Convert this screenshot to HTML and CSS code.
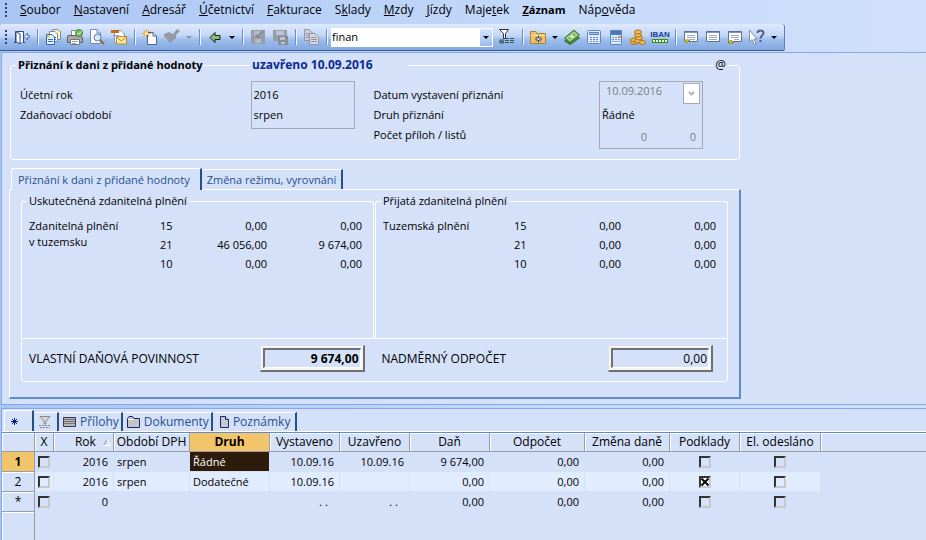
FILE: index.html
```html
<!DOCTYPE html>
<html lang="cs">

<head>
    <meta charset="UTF-8">
    <title>Přiznání k dani z přidané hodnoty</title>
    <meta name="viewport" content="width=device-width, initial-scale=1">
    <link rel="stylesheet" href="styles.css">
</head>

<body>

    <nav class="menu">
        <span class="grip"></span>
        <button><u>S</u>oubor</button>
        <button><u>N</u>astavení</button>
        <button><u>A</u>dresář</button>
        <button><u>Ú</u>četnictví</button>
        <button><u>F</u>akturace</button>
        <button>S<u>k</u>lady</button>
        <button><u>M</u>zdy</button>
        <button><u>J</u>ízdy</button>
        <button>Maje<u>t</u>ek</button>
        <button class="current"><u>Z</u>áznam</button>
        <button>Náp<u>o</u>věda</button>
    </nav>

    <div class="toolbar">
        <span class="grip"></span>
        <button class="tool" aria-label="Konec">
            <svg viewBox="0 0 16 16"><path d="M1.500 13V2.500H9.500V13" fill="#f4f8ff" stroke="#30497f"/><path d="M2 2.500L6 5V15L2 12.500Z" fill="#fff" stroke="#30497f"/><path d="M0 13.500H2M9 13.500H11" stroke="#30497f"/><path d="M10 7.500L13.500 4V6.500H15.500V8.500H13.500V11Z" fill="#d9e8ff" stroke="#4d76b5"/></svg>
        </button>
        <span class="sep"></span>
        <button class="tool" aria-label="Kopírovat záznam">
            <svg viewBox="0 0 16 16"><path d="M7.500 .5H13L15.500 3V10.500H7.500Z" fill="#fff3a8" stroke="#7b8db0"/><path d="M4.500 2.500H10L12.500 5V12.500H4.500Z" fill="#fff" stroke="#6d8cc4"/><path d="M1.500 5.500H7L9.500 8V15.500H1.500Z" fill="#e9f1ff" stroke="#2f63b5"/><path d="M2 6H5V9H2Z" fill="#f4d25a"/><path d="M3 10.500H8M3 12.500H8M10 8.500H11M10 10.500H11" stroke="#2f6cc8"/></svg>
        </button>
        <button class="tool" aria-label="Tisk">
            <svg viewBox="0 0 16 16"><path d="M4.500 1.500H12V7H4.500Z" fill="#fff" stroke="#888"/><path d="M1 6.500H14L15.500 9V13.500H.5V8Z" fill="#a9a9a9" stroke="#5f5f5f"/><path d="M3.500 10.500H12.500V15.500H3.500Z" fill="#fff" stroke="#777"/><path d="M5 12.500H11M5 14.500H9" stroke="#8aa"/><circle cx="12" cy="4" r="3.500" fill="#78b95c" stroke="#4c8c37"/><path d="M10 4L11.500 5.500L14 2.500" fill="none" stroke="#fff"/></svg>
        </button>
        <button class="tool" aria-label="Náhled">
            <svg viewBox="0 0 16 16"><path d="M1.500 .5H8L11.500 4V14.500H1.500Z" fill="#fff" stroke="#7388b5"/><path d="M8 .5V4H11.500" fill="#dce7fa" stroke="#7388b5"/><circle cx="8.500" cy="8.500" r="3.500" fill="#d5eaff" stroke="#527eae"/><path d="M11 11L15 15" stroke="#9c6633" stroke-width="2"/></svg>
        </button>
        <button class="tool" aria-label="Odeslat poštou">
            <svg viewBox="0 0 16 16"><path d="M3.500 1.500H10L13.500 5V13.500H3.500Z" fill="#fff" stroke="#8b93ac"/><path d="M0 1H8V4H0Z" fill="#c96c18"/><path d="M5.500 7.500H15.500V15H5.500Z" fill="#ffe7a0" stroke="#b58a33"/><path d="M5.500 8L10.500 12L15.500 8" fill="none" stroke="#b58a33"/><path d="M2 6.500H8" stroke="#8ca4cf"/></svg>
        </button>
        <span class="sep"></span>
        <button class="tool" aria-label="Nový">
            <svg viewBox="0 0 16 16"><path d="M5.500 3.500H11L14.500 7V15.500H5.500Z" fill="#fff" stroke="#46609b"/><path d="M11 3.500V7H14.500" fill="#dbe7fb" stroke="#46609b"/><path d="M4.500 0V9M0 4.500H9M1.500 1.500L7.500 7.500M7.500 1.500L1.500 7.500" stroke="#e6a21e"/><circle cx="4.500" cy="4.500" r="1.500" fill="#fff3a0"/></svg>
        </button>
        <button class="tool" aria-label="Formát" disabled>
            <svg viewBox="0 0 16 16"><path d="M0 5L5 3L9 5L13 0L16 2L12 6V9L6 14L0 7Z" fill="#9599a2"/></svg>
        </button>
        <button class="arrow" aria-label="Další formáty" disabled><svg viewBox="0 0 6 3"><path d="M0 0H6L3 3Z"/></svg></button>
        <span class="sep"></span>
        <button class="tool" aria-label="Zpět">
            <svg viewBox="0 0 16 16"><path d="M3 8.500L8 3.500V6.500H13V10.500H8V13.500Z" fill="#8fbb78" stroke="#10240c"/></svg>
        </button>
        <button class="arrow" aria-label="Historie"><svg viewBox="0 0 6 3"><path d="M0 0H6L3 3Z"/></svg></button>
        <span class="sep"></span>
        <button class="tool" aria-label="Uložit" disabled>
            <svg viewBox="0 0 16 16"><path d="M1 1H15V15H2L1 14Z" fill="#999ca4"/><path d="M4 2H12V7H4ZM5 10H11V14H5Z" fill="#b3b9c6"/><path d="M6 6L8 8L13 2" fill="none" stroke="#858992" stroke-width="2"/></svg>
        </button>
        <button class="tool" aria-label="Uložit a zavřít" disabled>
            <svg viewBox="0 0 16 16"><path d="M1 1H15V12H1Z" fill="#999ca4"/><path d="M4 2H12V6H4Z" fill="#bcc5d7"/><path d="M6 7H16V16H6Z" fill="#898d96"/><path d="M8 8H13V11H8ZM9 13H13V15H9Z" fill="#bac3d4"/></svg>
        </button>
        <span class="sep"></span>
        <button class="tool" aria-label="Kopírovat" disabled>
            <svg viewBox="0 0 16 16"><path d="M1.500 .5H6L9.500 4V11.500H1.500Z" fill="#cbd0dc" stroke="#9094a0"/><path d="M6.500 4.500H12L15.500 8V15.500H6.500Z" fill="#d5d9e2" stroke="#9094a0"/><path d="M3 4.500H6M3 6.500H6M3 8.500H6M8 8.500H13M8 10.500H14M8 12.500H14" stroke="#9094a0"/></svg>
        </button>
        <span class="sep"></span>
        <div class="combo">
            <input type="text" value="finan" aria-label="Hledat">
            <button aria-label="Rozbalit"><svg viewBox="0 0 6 3"><path d="M0 0H6L3 3Z"/></svg></button>
        </div>
        <button class="tool" aria-label="Filtr">
            <svg viewBox="0 0 16 16"><path d="M.5 .5H9.500L6.500 4.500V9.500H4.500V4.500Z" fill="#fff" stroke="#333"/><path d="M5 13.500V14H1V11H5M1 12.500H5M6 11.500H10M6 13.500H10M11 9.500H15M11 11.500H15M11 13.500H15M6 9.500H10" fill="none" stroke="#2b5a50"/></svg>
        </button>
        <span class="sep"></span>
        <button class="tool" aria-label="Složka">
            <svg viewBox="0 0 16 16"><path d="M.5 14.500V2.500H6L7 4.500H15.500V14.500Z" fill="#efc261" stroke="#a9833d"/><path d="M1 6.500H15" stroke="#ffe9a9"/><path d="M8.500 6.500V13.500M5 10H12M6 7.500L11 12.500M11 7.500L6 12.500" stroke="#213e8c"/><circle cx="8.500" cy="10" r="1" fill="#fff"/></svg>
        </button>
        <button class="arrow" aria-label="Další složky"><svg viewBox="0 0 6 3"><path d="M0 0H6L3 3Z"/></svg></button>
        <button class="tool" aria-label="Platby">
            <svg viewBox="0 0 16 16"><path d="M.5 12L9 5L15.500 9L6 15.500Z" fill="#4d8f3c" stroke="#2f6d2a"/><path d="M.5 9L10 1L15.500 6L6 13.500Z" fill="#7db562" stroke="#34752e"/><path d="M3 9L10 3.500L13 6L6 11.500Z" fill="none" stroke="#c6e0a8"/><ellipse cx="8" cy="7.500" rx="2" ry="1.500" fill="#e2efb8"/></svg>
        </button>
        <button class="tool" aria-label="Výpočet">
            <svg viewBox="0 0 16 16"><rect x="1.500" y="1.500" width="13" height="13" rx="1" fill="#dfeaff" stroke="#6086c5"/><path d="M3.500 3.500H12.500V5.500H3.500Z" fill="#a9c3ec" stroke="#5b82bf"/><path d="M4 8.500H13M4 10.500H13M4 12.500H13" stroke="#678bc5" stroke-dasharray="2 1"/></svg>
        </button>
        <button class="tool" aria-label="Kalkulačka">
            <svg viewBox="0 0 16 16"><path d="M2.500 1.500H13.500V15.500H2.500Z" fill="#deebff" stroke="#5f85c0"/><path d="M3 2H13V6H3Z" fill="#497bb9"/><path d="M4 8.500H12M4 10.500H12M4 12.500H12" stroke="#6f91c6" stroke-dasharray="2 1"/><path d="M10 7H13V9H10Z" fill="#e49035"/></svg>
        </button>
        <button class="tool" aria-label="Mince">
            <svg viewBox="0 0 16 16"><g fill="#f1bd54" stroke="#a96d19"><ellipse cx="4" cy="13.500" rx="3.500" ry="2"/><ellipse cx="4" cy="11" rx="3.500" ry="2"/><ellipse cx="8" cy="12" rx="3.500" ry="2"/><ellipse cx="9" cy="9" rx="3.500" ry="2"/><ellipse cx="8" cy="6" rx="3.500" ry="2"/><ellipse cx="8" cy="3" rx="3.500" ry="2"/><ellipse cx="12.500" cy="13.500" rx="3" ry="2"/></g></svg>
        </button>
        <button class="tool" aria-label="IBAN">
            <svg viewBox="0 0 16 16"><text x="8" y="8" class="iban" text-anchor="middle">IBAN</text><path d="M0 10H16V14H0Z" fill="#3c8a21"/><path d="M1 12H15" stroke="#eaffcb" stroke-width="2" stroke-dasharray="2 1"/></svg>
        </button>
        <span class="sep"></span>
        <button class="tool" aria-label="Seznam dole">
            <svg viewBox="0 0 16 16"><path d="M1.500 2.500H14.500V12.500H1.500Z" fill="#fff" stroke="#607294"/><path d="M2 3.500H14" stroke="#8395b7"/><path d="M4 6.500H12M4 8.500H12M7 10.500H12" stroke="#9aa8c0"/><path d="M1 11H7L4 14Z" fill="#e5d51d" stroke="#908718"/></svg>
        </button>
        <button class="tool" aria-label="Seznam">
            <svg viewBox="0 0 16 16"><path d="M1.500 2.500H14.500V12.500H1.500Z" fill="#fff" stroke="#607294"/><path d="M2 3.500H14" stroke="#8395b7"/><path d="M4 6.500H12M4 8.500H12M4 10.500H12" stroke="#9aa8c0"/></svg>
        </button>
        <button class="tool" aria-label="Seznam nahoře">
            <svg viewBox="0 0 16 16"><path d="M1.500 2.500H14.500V12.500H1.500Z" fill="#fff" stroke="#607294"/><path d="M2 3.500H14" stroke="#8395b7"/><path d="M4 6.500H12M4 8.500H12M7 10.500H12" stroke="#9aa8c0"/><path d="M1 14H7L4 11Z" fill="#e5d51d" stroke="#908718"/></svg>
        </button>
        <button class="tool" aria-label="Nápověda">
            <svg viewBox="0 0 16 16"><path d="M.5 1V13L3 10.500L5 15H7L5 10H8Z" fill="#fff" stroke="#8190a9"/><path d="M8.500 4C8.500 .5 14.500 .5 14.500 4C14.500 6.500 11.500 6.500 11.500 9.500M11.500 11V13" fill="none" stroke="#4d6384" stroke-width="2"/></svg>
        </button>
        <button class="arrow" aria-label="Další"><svg viewBox="0 0 6 3"><path d="M0 0H6L3 3Z"/></svg></button>
    </div>

    <main class="sheet">
        <section class="group">
            <div class="group-title">
                <h1>Přiznání k dani z přidané hodnoty</h1>
                <strong class="state">uzavřeno 10.09.2016</strong>
                <span class="at">@</span>
            </div>
            <div class="form">
                <div class="labels">
                    <label for="rok">Účetní rok</label>
                    <label for="obdobi">Zdaňovací období</label>
                </div>
                <div class="box">
                    <input type="text" id="rok" value="2016" readonly>
                    <input type="text" id="obdobi" value="srpen" readonly>
                </div>
                <div class="labels second">
                    <label for="datum">Datum vystavení přiznání</label>
                    <label for="druh">Druh přiznání</label>
                    <label for="priloh">Počet příloh / listů</label>
                </div>
                <div class="box">
                    <div class="date">
                        <input type="text" id="datum" value="10.09.2016" disabled>
                        <button aria-label="Kalendář" disabled><svg viewBox="0 0 8 6"><path d="M1 1L4 4L7 1" fill="none" stroke="#aaa" stroke-width="2"/></svg></button>
                    </div>
                    <input type="text" id="druh" value="Řádné" readonly>
                    <div class="counts">
                        <input type="text" id="priloh" value="0" disabled>
                        <input type="text" aria-label="Počet listů" value="0" disabled>
                    </div>
                </div>
            </div>
        </section>

        <div class="tabs">
            <button class="tab active">Přiznání k dani z přidané hodnoty</button>
            <button class="tab">Změna režimu, vyrovnání</button>
        </div>
        <div class="tab-panel">
            <div class="halves">
                <section class="half">
                    <h2>Uskutečněná zdanitelná plnění</h2>
                    <table class="rates">
                        <tr><th rowspan="3">Zdanitelná plnění<br>v tuzemsku</th><td>15</td><td class="base">0,00</td><td class="tax">0,00</td></tr>
                        <tr><td>21</td><td class="base">46 056,00</td><td class="tax">9 674,00</td></tr>
                        <tr><td>10</td><td class="base">0,00</td><td class="tax">0,00</td></tr>
                    </table>
                </section>
                <section class="half">
                    <h2>Přijatá zdanitelná plnění</h2>
                    <table class="rates">
                        <tr><th rowspan="3">Tuzemská plnění</th><td>15</td><td class="base">0,00</td><td class="tax">0,00</td></tr>
                        <tr><td>21</td><td class="base">0,00</td><td class="tax">0,00</td></tr>
                        <tr><td>10</td><td class="base">0,00</td><td class="tax">0,00</td></tr>
                    </table>
                </section>
            </div>
            <div class="totals">
                <div class="total">
                    <label for="povinnost">VLASTNÍ DAŇOVÁ POVINNOST</label>
                    <span class="bevel"><input type="text" id="povinnost" class="strong" value="9 674,00" readonly></span>
                </div>
                <div class="total">
                    <label for="odpocet">NADMĚRNÝ ODPOČET</label>
                    <span class="bevel"><input type="text" id="odpocet" value="0,00" readonly></span>
                </div>
            </div>
        </div>
    </main>

    <section class="list">
        <div class="list-tabs">
            <button class="list-tab active" aria-label="Seznam"><svg width="9" height="9" viewBox="0 0 9 9"><path d="M4.500 1V8M1 4.500H8M2 2L7 7M7 2L2 7" stroke="#0a1f7c"/></svg></button>
            <button class="list-tab narrow" aria-label="Filtr"><svg width="12" height="12" viewBox="0 0 12 12"><path d="M1 .5H11L7 5V8H5V5Z" fill="#d6d6d6" stroke="#888"/><path d="M0 9.500H12M1 11.500H11" stroke="#888" stroke-dasharray="2 1"/></svg></button>
            <button class="list-tab"><svg width="13" height="10" viewBox="0 0 13 10"><path d="M.5 .5H12.500V9.500H.5Z" fill="#b6b6b6" stroke="#333b59"/><path d="M1 2.500H12M1 4.500H12M1 6.500H12" stroke="#777"/></svg>Přílohy</button>
            <button class="list-tab"><svg width="13" height="12" viewBox="0 0 13 12"><path d="M.5 11.500V2.500L2 .5H5.500L7 2.500H12.500V11.500Z" fill="#c4c4c4" stroke="#14277d"/><path d="M1 3.500H7" stroke="#fff"/></svg>Dokumenty</button>
            <button class="list-tab notes"><svg width="9" height="12" viewBox="0 0 9 12"><path d="M.5 .5H5.500L8.500 3.500V11.500H.5Z" fill="#c8cad0" stroke="#14277d"/><path d="M5.500 .5V3.500H8.500" fill="#fff" stroke="#14277d"/></svg>Poznámky</button>
        </div>
        <div class="grid">
            <table class="records">
                <colgroup>
                    <col class="c-num"><col class="c-x"><col class="c-rok"><col class="c-obdobi"><col class="c-druh"><col class="c-date"><col class="c-date"><col class="c-dan"><col class="c-odpocet"><col class="c-zmena"><col class="c-date"><col class="c-el"><col>
                </colgroup>
                <thead>
                    <tr>
                        <th></th><th>X</th>
                        <th class="sorted">Rok <svg width="8" height="7" viewBox="0 0 8 7"><path d="M.5 6.500L4 .5" stroke="#999"/><path d="M4 .5L7.500 6.500H0" fill="none" stroke="#fff"/></svg></th>
                        <th>Období DPH</th><th class="picked">Druh</th><th>Vystaveno</th><th>Uzavřeno</th><th>Daň</th><th>Odpočet</th><th>Změna daně</th><th>Podklady</th><th>El. odesláno</th><th></th>
                    </tr>
                </thead>
                <tbody>
                    <tr>
                        <th class="picked">1</th><td class="check"><input type="checkbox" aria-label="Označit 1"></td><td class="num">2016</td><td>srpen</td><td class="selected">Řádné</td><td class="num">10.09.16</td><td class="num">10.09.16</td><td class="num">9 674,00</td><td class="num">0,00</td><td class="num">0,00</td><td class="check"><input type="checkbox" aria-label="Podklady 1"></td><td class="check"><input type="checkbox" aria-label="El. odesláno 1"></td><td></td>
                    </tr>
                    <tr class="even">
                        <th>2</th><td class="check"><input type="checkbox" aria-label="Označit 2"></td><td class="num">2016</td><td>srpen</td><td>Dodatečné</td><td class="num">10.09.16</td><td></td><td class="num">0,00</td><td class="num">0,00</td><td class="num">0,00</td><td class="check"><input type="checkbox" aria-label="Podklady 2" checked></td><td class="check"><input type="checkbox" aria-label="El. odesláno 2"></td><td></td>
                    </tr>
                    <tr>
                        <th>*</th><td class="check"><input type="checkbox" aria-label="Označit nový"></td><td class="num">0</td><td></td><td></td><td class="num dots">. .</td><td class="num dots">. .</td><td class="num">0,00</td><td class="num">0,00</td><td class="num">0,00</td><td class="check"><input type="checkbox" aria-label="Podklady nový"></td><td class="check"><input type="checkbox" aria-label="El. odesláno nový"></td><td></td>
                    </tr>
                </tbody>
            </table>
            <div class="gutter"></div>
        </div>
    </section>

</body>

</html>
```
FILE: styles.css
```css
* {
    box-sizing: border-box;
}

body {
    margin: 0;
    min-height: 100vh;
    display: flex;
    flex-direction: column;
    background: linear-gradient(90deg, #a9c5f3, #c5dafa 60%, #d0e0fa);
    font-family: "Open Sans", "Noto Sans", sans-serif;
    font-size: 12px;
    line-height: 16px;
    color: #000;
}

button,
input {
    font: inherit;
    color: inherit;
    margin: 0;
    padding: 0;
    border: none;
    background: none;
    border-radius: 0;
    min-width: 0;
}

h1,
h2 {
    margin: 0;
    font-size: 11px;
}

svg {
    display: block;
}

/* menu */
.menu {
    display: flex;
    align-items: center;
    height: 24px;
    padding: 0 5px 4px;
    gap: 13px;
}

.grip {
    width: 2px;
    height: 15px;
    background: repeating-linear-gradient(#2e4170 0 2px, transparent 2px 4px);
}

.current {
    font-size: 11px;
    font-weight: bold;
}

/* toolbar */
.toolbar {
    display: flex;
    align-items: center;
    align-self: flex-start;
    height: 27px;
    padding: 0 4px 0 5px;
    background: linear-gradient(#dfeafc, #c2d6f6 45%, #9dbdec 60%, #83a8e1);
    border-bottom: 1px solid #3c5a94;
    border-right: 1px solid #5d7fbb;
    border-radius: 3px 3px 2px 0;
}

.toolbar .grip {
    margin-right: 4px;
}

.tool {
    display: flex;
    justify-content: center;
    width: 22px;
}

.tool svg {
    width: 16px;
    height: 16px;
    overflow: visible;
}

.arrow {
    width: 12px;
    padding: 0 3px;
}

.arrow:disabled {
    fill: #8b919e;
}

.sep {
    width: 2px;
    height: 16px;
    margin: 0 3px 0 4px;
    background: linear-gradient(90deg, #6a8ccb 50%, #f2f7ff 50%);
}

.combo {
    display: flex;
    width: 162px;
    height: 19px;
    margin-right: 3px;
    padding: 1px;
    background: #fff;
}

.combo input {
    flex: 1;
    font-size: 11px;
}

.combo button {
    width: 12px;
    padding: 0 3px;
    background: linear-gradient(#d7e5fb, #9cbcec);
}

.iban {
    font-family: "Liberation Sans", sans-serif;
    font-size: 8px;
    font-weight: bold;
    fill: #153e9d;
}

/* form */
.sheet {
    margin: 1px 0 0 1px;
    padding: 12px 8px 5px 7px;
    background: #d4e1f8;
    border: 1px solid #85a9e6;
    border-right: none;
    font-size: 11px;
}

.group,
.tabs,
.tab-panel {
    max-width: 732px;
}

.group {
    max-width: 730px;
    height: 95px;
    margin-left: 1px;
    border: 1px solid #fff;
    border-radius: 3px;
}

.group-title {
    display: flex;
    margin: -9px 11px 0 5px;
}

.group-title h1,
.group-title strong,
.group-title span {
    padding: 0 2px;
    background: #d4e1f8;
}

.group-title h1 {
    width: 187px;
    white-space: nowrap;
}

.state {
    width: 158px;
    margin-left: 47px;
    font-size: 12px;
    color: #0a2a94;
}

.group-title .at {
    margin-left: auto;
    font-size: 12px;
}

.form {
    display: flex;
    align-items: flex-start;
    padding: 8px 36px 0 9px;
}

.labels {
    flex: 231;
    display: grid;
    grid-auto-rows: 20px;
    padding-top: 4px;
    line-height: 20px;
}

.labels.second {
    flex: 226;
    margin-left: 19px;
}

.box {
    flex: 0 0 104px;
    display: grid;
    grid-auto-rows: 20px;
    padding: 3px 2px;
    border: 1px solid #a4a9b5;
}

.box input {
    width: 100%;
}

.box .date {
    display: flex;
    align-items: flex-start;
    padding-left: 4px;
    height: 22px;
    margin-top: -2px;
    color: #7a7f89;
}

.date button {
    flex: none;
    width: 17px;
    height: 21px;
    padding: 0 4px;
    background: #fff;
    border: 1px solid #a4a9b5;
}

.counts {
    display: grid;
    grid-template-columns: 45px 1fr;
    padding-right: 4px;
    height: 24px;
    color: #7a7f89;
    text-align: right;
}

.counts input {
    text-align: right;
}

.tabs {
    display: flex;
    align-items: flex-end;
    margin-top: 8px;
    padding-left: 2px;
    color: #28508f;
}

.tab {
    height: 20px;
    padding: 0 5px;
    border-top: 1px solid #fff;
    border-right: 2px solid #245089;
    white-space: nowrap;
}

.tab.active {
    height: 22px;
    margin-bottom: -1px;
    padding: 0 10px 0 6px;
    border-left: 1px solid #fff;
    border-radius: 3px 0 0 0;
    background: #d4e1f8;
}

.tab-panel {
    padding: 11px 11px 15px;
    border: solid #fff;
    border-width: 1px 2px 2px 1px;
    border-right-color: #5d8cd0;
    border-bottom-color: #5d8cd0;
}

.halves {
    display: grid;
    grid-template-columns: 1fr 1fr;
    gap: 1px;
}

.half {
    height: 137px;
    border: 1px solid #fff;
    border-bottom: none;
    border-radius: 3px 3px 0 0;
}

.half h2 {
    width: max-content;
    margin: -9px 0 0 5px;
    padding: 0 2px;
    background: #d4e1f8;
    font-weight: normal;
}

.rates {
    width: 333px;
    margin: 7px 0 0 7px;
    border-collapse: collapse;
    table-layout: fixed;
}

.rates tr {
    height: 19px;
}

.rates th {
    width: 131px;
    padding: 2px 0 0;
    font-weight: normal;
    line-height: 16px;
    text-align: left;
    vertical-align: top;
}

.rates td {
    padding: 0;
}

.rates .base {
    width: 77px;
    text-align: right;
}

.rates .tax {
    width: 95px;
    text-align: right;
}

.totals {
    display: grid;
    grid-template-columns: 1fr 1fr;
    height: 44px;
    border: 1px solid #fff;
    border-radius: 0 0 3px 3px;
    font-size: 12px;
}

.total {
    display: flex;
    align-items: center;
    justify-content: space-between;
    padding: 0 14px 3px 7px;
}

.total:first-child {
    padding-right: 10px;
}

.bevel {
    display: flex;
    width: 105px;
    height: 27px;
    padding: 2px;
    background: #f4f4f2;
    border: 1px solid #e2e2e2;
    border-right: 2px solid #707070;
    border-bottom: 2px solid #707070;
}

.bevel input {
    width: 100%;
    padding-right: 1px;
    text-align: right;
    background: #d4e1f8;
    border: 1px solid #fff;
    border-top: 2px solid #6d7179;
    border-left: 2px solid #6d7179;
}

.strong {
    font-weight: bold;
}

/* record list */
.list {
    flex: 1;
    display: flex;
    flex-direction: column;
    margin: 3px 0 0 1px;
    background: #d4e1f8;
    border-top: 1px solid #85a9e6;
    border-left: 1px solid #85a9e6;
}

.list-tabs {
    display: flex;
    align-items: flex-end;
    height: 23px;
    padding: 2px 1px 0 2px;
    border-bottom: 1px solid #fff;
    color: #28508f;
}

.list-tab {
    display: flex;
    align-items: center;
    gap: 4px;
    height: 19px;
    padding: 0 2px 0 4px;
    border-top: 1px solid #fff;
    border-right: 2px solid #245089;
}

.list-tab.active {
    height: 21px;
    width: 30px;
    padding-left: 5px;
    border-left: 1px solid #fff;
    border-radius: 3px 0 0 0;
}

.list-tab.narrow {
    width: 25px;
    padding-left: 5px;
}

.list-tab.notes {
    padding: 0 5px 0 7px;
}

.grid {
    flex: 1;
    display: flex;
    flex-direction: column;
    border-top: 1px solid #5d8cd0;
}

.records {
    width: 100%;
    border-collapse: separate;
    border-spacing: 0;
    table-layout: fixed;
}

.records th {
    height: 19px;
    padding: 0;
    font-weight: normal;
    white-space: nowrap;
    border-right: 1px solid #9a9da4;
    border-bottom: 1px solid #9a9da4;
    box-shadow: inset 1px 1px #fff;
}

.records thead th:last-child {
    border-right: none;
}

.records .picked {
    background: #f3c56b;
    font-weight: bold;
    box-shadow: none;
}

.records .sorted {
    text-align: right;
    padding-right: 2px;
}

.sorted svg {
    display: inline-block;
    margin-left: 4px;
}

.records td {
    height: 20px;
    padding: 0 3px;
    border-right: 1px solid #d4e1f8;
    border-bottom: 1px solid #d4e1f8;
    font-size: 11px;
}

.records .num {
    padding-right: 5px;
    text-align: right;
}

.records .dots {
    padding-right: 11px;
}

.even td:not(:last-child) {
    background: #e1edfe;
}

.records .selected {
    background: #2d1c0b;
    color: #fff;
}

.records .check {
    padding: 0;
    text-align: center;
}

.check input {
    appearance: none;
    display: block;
    width: 12px;
    height: 12px;
    margin: 0 auto;
    border: 2px solid #f3f3f3;
    border-top-color: #333;
    border-left-color: #333;
    border-bottom-color: #c8c8c8;
    border-right-color: #c8c8c8;
}

.check input:checked {
    background: #fff url("data:image/svg+xml,%3Csvg xmlns='http://www.w3.org/2000/svg' viewBox='0 0 9 9'%3E%3Cpath d='M1 1L8 8M8 1L1 8' stroke='black' stroke-width='2'/%3E%3C/svg%3E") center / 9px;
}

.c-num {
    width: 33px;
}

.c-x {
    width: 19px;
}

.c-rok {
    width: 60px;
}

.c-obdobi {
    width: 76px;
}

.c-druh,
.c-dan {
    width: 80px;
}

.c-date {
    width: 70px;
}

.c-odpocet {
    width: 95px;
}

.c-zmena {
    width: 85px;
}

.c-el {
    width: 81px;
}

.gutter {
    flex: 1;
    width: 33px;
    border-right: 1px solid #9a9da4;
    box-shadow: inset 1px 1px #fff;
}
```
